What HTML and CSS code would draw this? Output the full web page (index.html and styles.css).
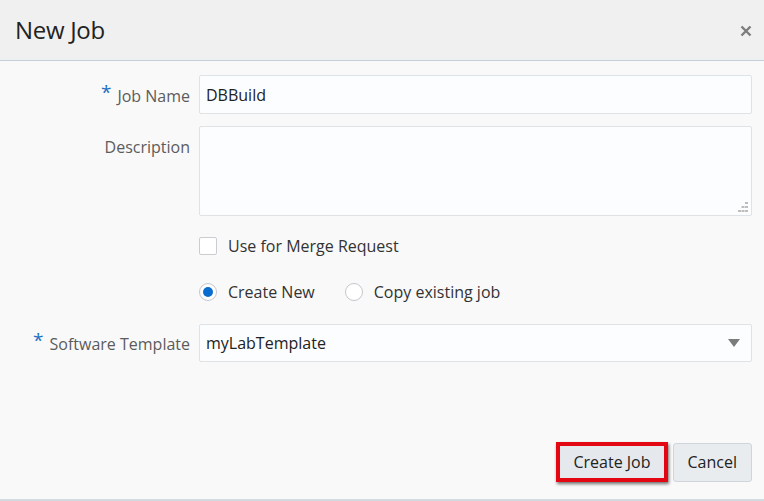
FILE: index.html
```html
<!DOCTYPE html>
<html>
<head>
<meta charset="utf-8">
<link rel="stylesheet" href="styles.css">
</head>
<body>
<div class="dialog">
  <div class="header">
    <div class="title">New Job</div>
    <div class="close">
      <svg width="12" height="12" viewBox="0 0 12 12"><path d="M1.5 1.5 L10.5 10.5 M10.5 1.5 L1.5 10.5" stroke="#7d7d7d" stroke-width="2.4" stroke-linecap="butt"/></svg>
    </div>
  </div>
  <div class="body">
    <div class="row row-name">
      <div class="label"><span class="req">*</span>Job Name</div>
      <div class="field"><div class="input">DBBuild</div></div>
    </div>
    <div class="row row-desc">
      <div class="label label-top">Description</div>
      <div class="field">
        <div class="textarea">
          <svg class="grip" width="10" height="10" viewBox="0 0 10 10" fill="#bdbdbd">
            <rect x="7" y="0" width="3" height="2"/>
            <rect x="3.5" y="4" width="3" height="2"/><rect x="7" y="4" width="3" height="2"/>
            <rect x="0" y="8" width="3" height="2"/><rect x="3.5" y="8" width="3" height="2"/><rect x="7" y="8" width="3" height="2"/>
          </svg>
        </div>
      </div>
    </div>
    <div class="row row-check">
      <div class="label"></div>
      <div class="field choices">
        <span class="checkbox"></span><span class="opt-text">Use for Merge Request</span>
      </div>
    </div>
    <div class="row row-radio">
      <div class="label"></div>
      <div class="field choices">
        <span class="radio checked"></span><span class="opt-text">Create New</span>
        <span class="radio second"></span><span class="opt-text">Copy existing job</span>
      </div>
    </div>
    <div class="row row-select">
      <div class="label"><span class="req">*</span>Software Template</div>
      <div class="field">
        <div class="select">
          <span>myLabTemplate</span>
          <svg width="12" height="8" viewBox="0 0 12 8"><path d="M0 0 H12 L6 8 Z" fill="#7b7b7b"/></svg>
        </div>
      </div>
    </div>
  </div>
  <div class="footer">
    <div class="highlight"><button class="btn">Create Job</button></div>
    <button class="btn cancel">Cancel</button>
  </div>
</div>
</body>
</html>
```

FILE: styles.css
```css
* { box-sizing: border-box; }
html, body { margin: 0; padding: 0; }
body {
  width: 764px;
  height: 501px;
  overflow: hidden;
  background: #f9f9f9;
  font-family: "Open Sans", "Noto Sans", sans-serif;
  color: #333;
}
.dialog {
  height: 501px;
  display: flex;
  flex-direction: column;
  border-bottom: 2px solid #d4dbe2;
}
.header {
  height: 61px;
  background: #f0f0f0;
  border-bottom: 1px solid #c6d0da;
  display: flex;
  align-items: center;
  justify-content: space-between;
  padding: 0 12px 0 15px;
}
.title {
  font-size: 24px;
  color: #222;
  letter-spacing: -0.3px;
  margin-top: -2px;
}
.close { display: flex; margin-top: 2px; }
.body {
  flex: 1;
  padding: 14px 12px 0 0;
  display: flex;
  flex-direction: column;
}
.row {
  display: flex;
  align-items: center;
}
.label {
  width: 199px;
  flex: none;
  text-align: right;
  padding-right: 9px;
  font-size: 16px;
  color: #5c5c5c;
}
.req {
  color: #1f6fbf;
  font-size: 19px;
  margin-right: 6px;
  position: relative;
  top: -3px;
}
.field { flex: 1; }
.input {
  height: 39px;
  border: 1px solid #dfe3e6;
  border-radius: 2px;
  background: #fcfdfe;
  padding: 0 6px;
  display: flex;
  align-items: center;
  font-size: 16px;
  color: #222;
}
.row-desc { margin-top: 12px; align-items: flex-start; }
.label-top { padding-top: 10px; }
.textarea {
  height: 90px;
  border: 1px solid #dfe3e6;
  border-radius: 2px;
  background: #fcfdfe;
  position: relative;
}
.grip { position: absolute; right: 3px; bottom: 3px; }
.row-check { margin-top: 21px; height: 18px; }
.row-radio { margin-top: 27px; height: 20px; }
.choices {
  display: flex;
  align-items: center;
  font-size: 16px;
  color: #333;
}
.checkbox {
  width: 18px;
  height: 18px;
  border: 1px solid #c9cdd1;
  border-radius: 2px;
  background: #fff;
  flex: none;
}
.opt-text { margin-left: 11px; }
.radio {
  width: 18px;
  height: 18px;
  border: 1px solid #c3c8cd;
  border-radius: 50%;
  background: #fff;
  flex: none;
  display: flex;
  align-items: center;
  justify-content: center;
}
.radio.checked::after {
  content: "";
  width: 10px;
  height: 10px;
  border-radius: 50%;
  background: #0a6ed1;
}
.radio.second { margin-left: 30px; }
.row-select { margin-top: 22px; }
.select {
  height: 38px;
  border: 1px solid #dfe3e6;
  border-radius: 2px;
  background: #fcfdfe;
  padding: 0 11px 0 6px;
  display: flex;
  align-items: center;
  justify-content: space-between;
  font-size: 16px;
  color: #222;
}
.footer {
  display: flex;
  justify-content: flex-end;
  align-items: center;
  padding: 0 12px 17px 0;
  gap: 5px;
}
.highlight {
  border: 4px solid #e30613;
  box-shadow: 1px 2px 3px rgba(0,0,0,0.55);
  display: flex;
}
.btn {
  font-family: inherit;
  font-size: 16px;
  color: #222;
  height: 32px;
  padding: 0 13px;
  background: #e5e9ed;
  border: none;
  border-radius: 0;
  cursor: pointer;
}
.cancel {
  height: 39px;
  padding: 0 14px;
  border: 1px solid #cfd5da;
  border-radius: 3px;
  background: #e8ecef;
}
```
